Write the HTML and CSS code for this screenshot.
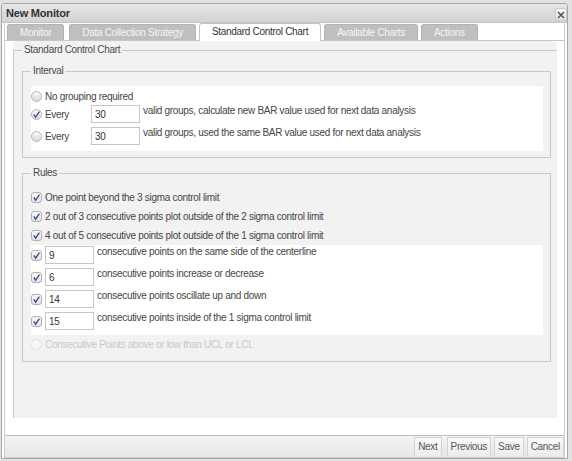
FILE: index.html
```html
<!DOCTYPE html>
<html>
<head>
<meta charset="utf-8">
<title>New Monitor</title>
<link rel="stylesheet" href="styles.css">
</head>
<body>
<svg class="defs" width="0" height="0" aria-hidden="true">
  <defs>
    <linearGradient id="gRadio" x1="0" y1="0" x2="0" y2="1">
      <stop offset="0" stop-color="#ffffff"/>
      <stop offset="1" stop-color="#d6d6d6"/>
    </linearGradient>
    <linearGradient id="gCheck" x1="0" y1="0" x2="0" y2="1">
      <stop offset="0" stop-color="#fdfdfd"/>
      <stop offset="1" stop-color="#e2e2e2"/>
    </linearGradient>
    <symbol id="radio" viewBox="0 0 11 11">
      <circle cx="5.5" cy="5.5" r="5" fill="url(#gRadio)" stroke="#b4b4b4"/>
    </symbol>
    <symbol id="radioOn" viewBox="0 0 11 11">
      <circle cx="5.5" cy="5.5" r="5" fill="url(#gRadio)" stroke="#b4b4b4"/>
      <path d="M2.8 5.6 L4.6 8.2 L8.4 2.6" fill="none" stroke="#3a5290" stroke-width="1.3"/>
    </symbol>
    <symbol id="radioOff" viewBox="0 0 11 11">
      <circle cx="5.5" cy="5.5" r="5" fill="#f6f6f6" stroke="#e0e0e0"/>
    </symbol>
    <symbol id="check" viewBox="0 0 11 11">
      <rect x="0.5" y="0.5" width="10" height="10" rx="2.5" fill="url(#gCheck)" stroke="#b0b0b0"/>
      <path d="M2.8 5.4 L4.6 8.2 L8.4 2.6" fill="none" stroke="#3a5290" stroke-width="1.4"/>
    </symbol>
  </defs>
</svg>

<div class="window">
  <div class="titlebar">
    <span class="title">New Monitor</span>
    <span class="close"><svg width="10" height="10" viewBox="0 0 10 10"><path d="M2 2 L8 8 M8 2 L2 8" stroke="#555" stroke-width="1.6"/></svg></span>
  </div>
  <div class="frame">
    <div class="tabs">
      <div class="tab first">Monitor</div>
      <div class="tab">Data Collection Strategy</div>
      <div class="tab active">Standard Control Chart</div>
      <div class="tab">Available Charts</div>
      <div class="tab">Actions</div>
    </div>
    <div class="content">
      <div class="panel">
        <fieldset class="outer">
          <legend>Standard Control Chart</legend>

          <fieldset class="group">
            <legend>Interval</legend>
            <div class="box interval">
              <div class="row first">
                <svg class="ico"><use href="#radio"/></svg>
                <span>No grouping required</span>
              </div>
              <div class="row every">
                <span class="lbl"><svg class="ico"><use href="#radioOn"/></svg><span>Every</span></span>
                <span class="field">30</span>
                <span class="after">valid groups, calculate new BAR value used for next data analysis</span>
              </div>
              <div class="row every last">
                <span class="lbl"><svg class="ico"><use href="#radio"/></svg><span>Every</span></span>
                <span class="field">30</span>
                <span class="after">valid groups, used the same BAR value used for next data analysis</span>
              </div>
            </div>
          </fieldset>

          <fieldset class="group rules">
            <legend>Rules</legend>
            <div class="row plain"><svg class="ico"><use href="#check"/></svg><span>One point beyond the 3 sigma control limit</span></div>
            <div class="row plain"><svg class="ico"><use href="#check"/></svg><span>2 out of 3 consecutive points plot outside of the 2 sigma control limit</span></div>
            <div class="row plain"><svg class="ico"><use href="#check"/></svg><span>4 out of 5 consecutive points plot outside of the 1 sigma control limit</span></div>
            <div class="box counts">
              <div class="row count"><svg class="ico"><use href="#check"/></svg><span class="field">9</span><span class="after">consecutive points on the same side of the centerline</span></div>
              <div class="row count"><svg class="ico"><use href="#check"/></svg><span class="field">6</span><span class="after">consecutive points increase or decrease</span></div>
              <div class="row count"><svg class="ico"><use href="#check"/></svg><span class="field">14</span><span class="after">consecutive points oscillate up and down</span></div>
              <div class="row count"><svg class="ico"><use href="#check"/></svg><span class="field">15</span><span class="after">consecutive points inside of the 1 sigma control limit</span></div>
            </div>
            <div class="row plain disabled"><svg class="ico"><use href="#radioOff"/></svg><span>Consecutive Points above or low than UCL or LCL</span></div>
          </fieldset>
        </fieldset>
      </div>
    </div>
    <div class="footer">
      <span class="btn next">Next</span>
      <span class="btn">Previous</span>
      <span class="btn">Save</span>
      <span class="btn">Cancel</span>
    </div>
  </div>
</div>
</body>
</html>
```
FILE: styles.css
```css
html, body {
  margin: 0;
}
body {
  background: #e2e2e2;
  padding: 3px 0 0 1px;
  font-family: "Liberation Sans", Arial, sans-serif;
  font-size: 10px;
  letter-spacing: -0.3px;
  color: #454545;
}
.defs {
  position: absolute;
  width: 0;
  height: 0;
}

.window {
  width: 567px;
  height: 456px;
  box-sizing: border-box;
  border: 1px solid #a6a6a6;
  border-radius: 3px 3px 0 0;
  background: #ffffff;
  display: flex;
  flex-direction: column;
}

.titlebar {
  height: 18px;
  border-bottom: 1px solid #c2c2c2;
  background: linear-gradient(#e6e6e6, #d3d3d3);
  border-radius: 2px 2px 0 0;
  display: flex;
  justify-content: space-between;
  align-items: flex-start;
}
.title {
  font-weight: bold;
  font-size: 11px;
  letter-spacing: -0.2px;
  color: #333;
  line-height: 18px;
  padding-left: 4px;
}
.close {
  margin-top: 4px;
  width: 10px;
  height: 11px;
  border: 1px solid #c6c6c6;
  border-radius: 2px;
  background: linear-gradient(#fafafa, #e2e2e2);
  display: flex;
  align-items: center;
  justify-content: center;
}

.frame {
  flex: 1;
  margin: 0 2px;
  border: 1px solid #cfcfcf;
  border-top: none;
  display: flex;
  flex-direction: column;
}

.tabs {
  height: 17px;
  border-bottom: 1px solid #c8c8c8;
  display: flex;
  align-items: flex-end;
  padding: 0 2px 0 2px;
}
.tab {
  height: 15px;
  line-height: 15px;
  padding: 0 12px;
  margin-right: 3px;
  border: 1px solid #b3b3b3;
  border-bottom: none;
  border-radius: 3px 3px 0 0;
  background: #bfbfbf;
  color: #f5f5f5;
  white-space: nowrap;
}
.tab.first {
  margin-right: 5px;
}
.tab.active {
  height: 17px;
  line-height: 16px;
  margin-bottom: -1px;
  background: #ffffff;
  color: #333;
  border-color: #c4c4c4;
}

.content {
  flex: 1;
  display: flex;
  padding: 0 7px 17px 8px;
}
.panel {
  flex: 1;
  background: #f2f2f2;
  padding-top: 2px;
  display: flex;
  flex-direction: column;
}

fieldset {
  margin: 0;
  min-width: 0;
  border: 1px solid #c8c8c8;
}
legend {
  padding: 0 2px;
  line-height: 14px;
  color: #4a4a4a;
}
.outer {
  flex: 1;
  border-right: none;
  border-bottom: none;
  padding: 7px 6px 0 8px;
}
.group {
  padding: 8px 7px 6px 8px;
}
.group.rules {
  margin-top: 8px;
  padding-bottom: 8px;
}

.box {
  background: #ffffff;
}
.box.interval {
  padding: 2px 0 6px 0;
}
.box.counts {
  padding-bottom: 2px;
}

.row {
  display: flex;
  align-items: center;
  white-space: nowrap;
}
.ico {
  width: 11px;
  height: 11px;
  flex: none;
  margin-right: 3px;
}
.row.first {
  height: 16px;
}
.row.every {
  height: 18px;
  margin-top: 1px;
  align-items: flex-start;
}
.row.every.last {
  margin-top: 4px;
}
.lbl {
  width: 60px;
  height: 18px;
  display: flex;
  align-items: center;
}
.field {
  box-sizing: border-box;
  width: 49px;
  height: 18px;
  border: 1px solid #c6c6c6;
  background: #fff;
  padding-left: 3px;
  line-height: 17px;
  color: #333;
  flex: none;
}
.after {
  margin-left: 3px;
  line-height: 12px;
  align-self: flex-start;
}
.row.plain {
  height: 19px;
}
.row.count {
  height: 22px;
  align-items: flex-start;
}
.row.count .ico {
  margin-top: 5px;
}
.row.count .field {
  margin-top: 1px;
}
.row.count .after {
  margin-top: 1px;
}
.row.disabled {
  height: 18px;
  color: #c8c8c8;
}

.footer {
  height: 21px;
  border-top: 1px solid #c7bcbc;
  background: linear-gradient(#f4f4f4, #e6e6e6);
  display: flex;
  justify-content: flex-end;
  align-items: flex-start;
}
.btn {
  margin-top: 1px;
  margin-left: 3px;
  height: 19px;
  line-height: 18px;
  box-sizing: border-box;
  padding: 0 3px;
  border: 1px solid #d2d2d2;
  border-bottom-color: #ececec;
  background: linear-gradient(#fbfbfb, #ededed);
  color: #555;
}
.btn.next {
  margin-right: 2px;
}
```
